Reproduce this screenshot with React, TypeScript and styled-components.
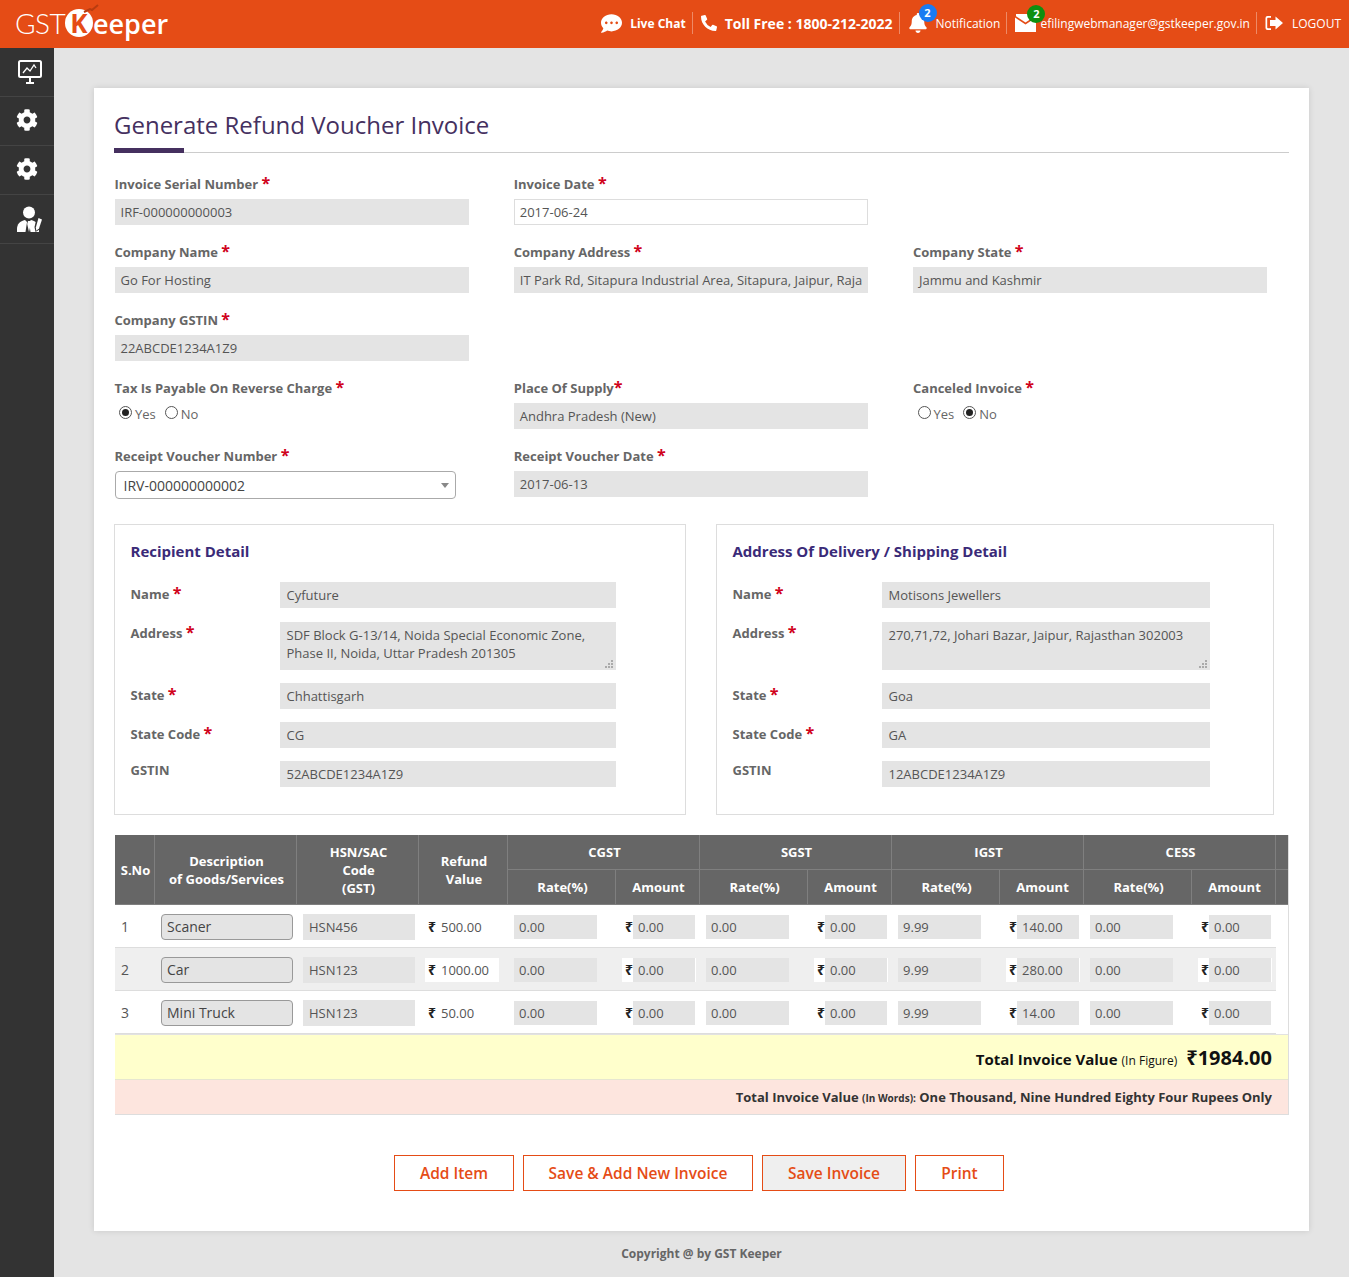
import React from "react";
import styled, { createGlobalStyle } from "styled-components";
import { FaBell, FaCog, FaCommentDots, FaPhoneAlt } from "react-icons/fa";

const ORANGE = "#e54c16";

const GlobalStyle = createGlobalStyle`
  * { box-sizing: border-box; }
  html, body { margin: 0; padding: 0; }
  body {
    background: #e4e4e4;
    font-family: "Open Sans", "Noto Sans", "DejaVu Sans", sans-serif;
    color: #555;
  }
`;

const items = [
  { no: 1, name: "Scaner", hsn: "HSN456", value: "500.00", igst: "140.00" },
  { no: 2, name: "Car", hsn: "HSN123", value: "1000.00", igst: "280.00" },
  { no: 3, name: "Mini Truck", hsn: "HSN123", value: "50.00", igst: "14.00" },
];

const Monitor = () => (
  <svg width="24" height="24" viewBox="0 0 24 24" fill="none" stroke="#fff">
    <rect x="1" y="1" width="22" height="16" rx="1.5" strokeWidth="2" />
    <path d="M5 13l4-5 3 3 4-6 2 3" strokeWidth="1.3" />
    <path d="M12 18v4M8 23h8" strokeWidth="2" />
  </svg>
);

const AgentIcon = () => (
  <svg width="26" height="26" viewBox="0 0 26 26" fill="#fff">
    <circle cx="12" cy="6.500" r="6" />
    <path d="M0 26v-3c0-5 3-8 8-9l2 2-1.500 10z" />
    <path d="M22 26v-3c0-5-3-8-8-9l-2 2 1.500 10z" />
    <path d="M11 15h2l.8 3-1.800 8-1.800-8z" />
    <path d="M20 10.500 26 13l-3.500 10.500L18.500 26l-1-5z" fill="#333" />
    <path d="M21.500 12 25 13.500l-3 9-2.800 2.200-.3-3.500z" />
  </svg>
);

const MailIcon = () => (
  <svg width="21" height="18" viewBox="0 0 21 18" fill="#fff">
    <path d="M0 3.500 10.500 10.500 21 3.500V18H0z" />
    <path d="M1 0h19v2.200L10.500 8.500 1 2.200z" />
  </svg>
);

const LogoutIcon = () => (
  <svg width="18" height="16" viewBox="0 0 18 16" fill="#fff">
    <path d="M6 1H2.500A2 2 0 0 0 .5 3v10a2 2 0 0 0 2 2H6v-1.800H3a.8.8 0 0 1-.8-.8V3.600A.8.8 0 0 1 3 2.800h3z" />
    <path d="M10.500 1.500 18 8l-7.500 6.500V11H5V5h5.500z" />
  </svg>
);

const Grip = () => (
  <svg width="9" height="9" viewBox="0 0 9 9" fill="#aaa">
    <rect x="6" y="0" width="2" height="2" />
    <rect x="3" y="3" width="2" height="2" />
    <rect x="6" y="3" width="2" height="2" />
    <rect x="0" y="6" width="2" height="2" />
    <rect x="3" y="6" width="2" height="2" />
    <rect x="6" y="6" width="2" height="2" />
  </svg>
);

const App = () => {
  return (
    <>
      <GlobalStyle />
      <Header>
        <Logo>
          <LogoThin>GST</LogoThin>
          <LogoBadge>
            K
            <LogoTick width="16" height="9" viewBox="0 0 16 9" fill="none">
              <path d="M1 8 7 5l2 1 6-5" stroke="#b83c10" strokeWidth="2" />
            </LogoTick>
          </LogoBadge>
          <LogoBold>eeper</LogoBold>
        </Logo>
        <HeaderNav>
          <NavItem>
            <FaCommentDots size={21} color="#fff" />
            <ChatText>Live Chat</ChatText>
          </NavItem>
          <NavItem>
            <FaPhoneAlt size={16} color="#fff" />
            <TollText>Toll Free : 1800-212-2022</TollText>
          </NavItem>
          <NavItem>
            <IconWrap>
              <FaBell size={20} color="#fff" />
              <Badge $color="#1a7bf2">2</Badge>
            </IconWrap>
            <NavText $gap={8}>Notification</NavText>
          </NavItem>
          <NavItem>
            <IconWrap>
              <MailIcon />
              <Badge $color="#0f8f10">2</Badge>
            </IconWrap>
            <NavText $gap={4}>efilingwebmanager@gstkeeper.gov.in</NavText>
          </NavItem>
          <NavItem $last>
            <LogoutIcon />
            <NavText $gap={9}>LOGOUT</NavText>
          </NavItem>
        </HeaderNav>
      </Header>

      <Body>
        <Sidebar>
          <SideItem $shift={6}><Monitor /></SideItem>
          <SideItem><FaCog size={22} color="#fff" /></SideItem>
          <SideItem><FaCog size={22} color="#fff" /></SideItem>
          <SideItem $shift={6}><AgentIcon /></SideItem>
        </Sidebar>

        <Main>
          <Card>
            <Title>Generate Refund Voucher Invoice</Title>

            <FormGrid>
              <Field>
                <Label>Invoice Serial Number <Star>*</Star></Label>
                <Input>IRF-000000000003</Input>
              </Field>
              <Field>
                <Label>Invoice Date <Star>*</Star></Label>
                <Input $editable>2017-06-24</Input>
              </Field>
              <Field />

              <Field>
                <Label>Company Name <Star>*</Star></Label>
                <Input>Go For Hosting</Input>
              </Field>
              <Field>
                <Label>Company Address <Star>*</Star></Label>
                <Input>IT Park Rd, Sitapura Industrial Area, Sitapura, Jaipur, Raja</Input>
              </Field>
              <Field>
                <Label>Company State <Star>*</Star></Label>
                <Input>Jammu and Kashmir</Input>
              </Field>

              <Field>
                <Label>Company GSTIN <Star>*</Star></Label>
                <Input>22ABCDE1234A1Z9</Input>
              </Field>
              <Field />
              <Field />

              <Field>
                <Label>Tax Is Payable On Reverse Charge <Star>*</Star></Label>
                <RadioRow>
                  <Radio $checked />Yes
                  <Radio />No
                </RadioRow>
              </Field>
              <Field>
                <Label>Place Of Supply<Star>*</Star></Label>
                <Input>Andhra Pradesh (New)</Input>
              </Field>
              <Field>
                <Label>Canceled Invoice <Star>*</Star></Label>
                <RadioRow>
                  <Radio />Yes
                  <Radio $checked />No
                </RadioRow>
              </Field>

              <Field>
                <Label>Receipt Voucher Number <Star>*</Star></Label>
                <Select>
                  IRV-000000000002
                  <Caret />
                </Select>
              </Field>
              <Field>
                <Label>Receipt Voucher Date <Star>*</Star></Label>
                <Input>2017-06-13</Input>
              </Field>
            </FormGrid>

            <Panels>
              <Panel $width={572} $inset={69}>
                <PanelTitle>Recipient Detail</PanelTitle>
                <PanelRow>
                  <PanelLabel>Name <Star>*</Star></PanelLabel>
                  <Input>Cyfuture</Input>
                </PanelRow>
                <PanelRow>
                  <PanelLabel>Address <Star>*</Star></PanelLabel>
                  <TextArea>
                    SDF Block G-13/14, Noida Special Economic Zone, Phase II, Noida, Uttar Pradesh 201305
                    <GripSpot><Grip /></GripSpot>
                  </TextArea>
                </PanelRow>
                <PanelRow>
                  <PanelLabel>State <Star>*</Star></PanelLabel>
                  <Input>Chhattisgarh</Input>
                </PanelRow>
                <PanelRow>
                  <PanelLabel>State Code <Star>*</Star></PanelLabel>
                  <Input>CG</Input>
                </PanelRow>
                <PanelRow>
                  <GstinLabel>GSTIN</GstinLabel>
                  <Input>52ABCDE1234A1Z9</Input>
                </PanelRow>
              </Panel>

              <Panel $width={558} $inset={63}>
                <PanelTitle>Address Of Delivery / Shipping Detail</PanelTitle>
                <PanelRow>
                  <PanelLabel>Name <Star>*</Star></PanelLabel>
                  <Input>Motisons Jewellers</Input>
                </PanelRow>
                <PanelRow>
                  <PanelLabel>Address <Star>*</Star></PanelLabel>
                  <TextArea>
                    270,71,72, Johari Bazar, Jaipur, Rajasthan 302003
                    <GripSpot><Grip /></GripSpot>
                  </TextArea>
                </PanelRow>
                <PanelRow>
                  <PanelLabel>State <Star>*</Star></PanelLabel>
                  <Input>Goa</Input>
                </PanelRow>
                <PanelRow>
                  <PanelLabel>State Code <Star>*</Star></PanelLabel>
                  <Input>GA</Input>
                </PanelRow>
                <PanelRow>
                  <GstinLabel>GSTIN</GstinLabel>
                  <Input>12ABCDE1234A1Z9</Input>
                </PanelRow>
              </Panel>
            </Panels>

            <TableWrap>
              <Table>
                <colgroup>
                  <col width="40" />
                  <col width="142" />
                  <col width="122" />
                  <col width="89" />
                  {[0, 1, 2, 3].map((i) => (
                    <React.Fragment key={i}>
                      <col width="108" />
                      <col width="84" />
                    </React.Fragment>
                  ))}
                  <col width="12" />
                </colgroup>
                <thead>
                  <tr>
                    <Th rowSpan={2}>S.No</Th>
                    <Th rowSpan={2}>Description<br />of Goods/Services</Th>
                    <Th rowSpan={2}>HSN/SAC<br />Code<br />(GST)</Th>
                    <Th rowSpan={2}>Refund<br />Value</Th>
                    <Th colSpan={2}>CGST</Th>
                    <Th colSpan={2}>SGST</Th>
                    <Th colSpan={2}>IGST</Th>
                    <Th colSpan={2}>CESS</Th>
                    <Th />
                  </tr>
                  <tr>
                    {["c", "s", "i", "e"].map((k) => (
                      <React.Fragment key={k}>
                        <Th>Rate(%)</Th>
                        <Th>Amount</Th>
                      </React.Fragment>
                    ))}
                    <Th />
                  </tr>
                </thead>
                <tbody>
                  {items.map((item) => {
                    const even = item.no % 2 === 0;
                    const taxes = [
                      { rate: "0.00", amount: "0.00" },
                      { rate: "0.00", amount: "0.00" },
                      { rate: "9.99", amount: item.igst },
                      { rate: "0.00", amount: "0.00" },
                    ];
                    return (
                      <tr key={item.no}>
                        <Td $even={even}><SerialNo>{item.no}</SerialNo></Td>
                        <Td $even={even}><DescInput>{item.name}</DescInput></Td>
                        <Td $even={even}><HsnInput>{item.hsn}</HsnInput></Td>
                        <Td $even={even}>
                          <RefundBox $even={even}><Rupee>₹</Rupee>{item.value}</RefundBox>
                        </Td>
                        {taxes.map((tax, i) => (
                          <React.Fragment key={i}>
                            <Td $even={even}><RateBox>{tax.rate}</RateBox></Td>
                            <Td $even={even}>
                              <AmountWrap $even={even}>
                                <AmountRupee>₹</AmountRupee>
                                <AmountBox>{tax.amount}</AmountBox>
                              </AmountWrap>
                            </Td>
                          </React.Fragment>
                        ))}
                        <EmptyTd />
                      </tr>
                    );
                  })}
                </tbody>
              </Table>
              <FigureRow>
                <FigureLabel>Total Invoice Value</FigureLabel>
                <FigureHint>(In Figure)</FigureHint>
                <FigureValue>₹1984.00</FigureValue>
              </FigureRow>
              <WordsRow>
                Total Invoice Value <WordsHint>(In Words):</WordsHint> One Thousand, Nine Hundred Eighty Four Rupees Only
              </WordsRow>
            </TableWrap>

            <Actions>
              <ActionButton $width={120}>Add Item</ActionButton>
              <ActionButton $width={230}>Save &amp; Add New Invoice</ActionButton>
              <ActionButton $width={144} $active>Save Invoice</ActionButton>
              <ActionButton $width={89}>Print</ActionButton>
            </Actions>
          </Card>
          <Footer>Copyright @ by GST Keeper</Footer>
        </Main>
      </Body>
    </>
  );
};

export default App;

const Header = styled.header`
  height: 48px;
  background: ${ORANGE};
  display: flex;
  align-items: center;
  justify-content: space-between;
  padding: 0 8px 2px 15px;
  color: #fff;
`;

const Logo = styled.div`
  display: flex;
  align-items: center;
`;

const LogoThin = styled.span`
  font-family: "Lato", sans-serif;
  font-weight: 300;
  font-size: 28px;
  width: 50px;
  letter-spacing: -0.5px;
`;

const LogoBadge = styled.span`
  position: relative;
  width: 28px;
  height: 28px;
  border-radius: 50%;
  background: #fff;
  color: ${ORANGE};
  font-weight: 700;
  font-size: 26px;
  line-height: 28px;
  text-align: center;
`;

const LogoTick = styled.svg`
  position: absolute;
  top: -5px;
  left: 18px;
`;

const LogoBold = styled.span`
  font-size: 27px;
  font-weight: 600;
  line-height: 30px;
  margin-top: 2px;
  margin-left: 0;
`;

const HeaderNav = styled.nav`
  display: flex;
  align-items: center;
`;

const NavItem = styled.div<{ $last?: boolean }>`
  display: flex;
  align-items: center;
  height: 22px;
  padding: 0 ${(p) => (p.$last ? "0" : "6px")} 0 8px;
  border-right: ${(p) => (p.$last ? "none" : "1px solid rgba(255, 255, 255, 0.35)")};
`;

const ChatText = styled.span`
  font-size: 12px;
  font-weight: 700;
  margin-left: 8px;
`;

const TollText = styled.span`
  font-size: 14px;
  font-weight: 700;
  margin-left: 8px;
`;

const NavText = styled.span<{ $gap: number }>`
  font-size: 12px;
  margin-left: ${(p) => p.$gap}px;
`;

const IconWrap = styled.span`
  position: relative;
  display: flex;
`;

const Badge = styled.span<{ $color: string }>`
  position: absolute;
  top: -9px;
  right: -9px;
  width: 18px;
  height: 18px;
  border-radius: 50%;
  background: ${(p) => p.$color};
  color: #fff;
  font-size: 11px;
  font-weight: 700;
  line-height: 18px;
  text-align: center;
`;

const Body = styled.div`
  display: flex;
  min-height: 1229px;
`;

const Sidebar = styled.aside`
  width: 54px;
  flex-shrink: 0;
  background: #333;
`;

const SideItem = styled.div<{ $shift?: number }>`
  height: 49px;
  padding-left: ${(p) => p.$shift ?? 0}px;
  padding-bottom: ${(p) => (p.$shift ? 0 : 2)}px;
  display: flex;
  align-items: center;
  justify-content: center;
  border-bottom: 1px solid #444;
`;

const Main = styled.main`
  flex: 1;
  min-width: 0;
  padding: 40px 40px 0;
`;

const Card = styled.section`
  background: #fff;
  box-shadow: 0 0 6px rgba(0, 0, 0, 0.12);
  padding: 20px 20px 40px;
  height: 1143px;
`;

const Title = styled.h1`
  position: relative;
  margin: 0 0 23px;
  height: 45px;
  font-size: 24px;
  line-height: 34px;
  font-weight: 400;
  color: #45305f;
  border-bottom: 1px solid #ccc;

  &::after {
    content: "";
    position: absolute;
    left: 0;
    bottom: -1px;
    width: 70px;
    height: 5px;
    background: #45305f;
  }
`;

const FormGrid = styled.div`
  display: grid;
  margin-left: 0.500px;
  grid-template-columns: 399.250px 399.250px 1fr;
  grid-auto-rows: 68px;
`;

const Field = styled.div`
  width: 354.250px;
`;

const Label = styled.div`
  height: 23px;
  font-size: 13px;
  font-weight: 700;
  line-height: 17px;
  color: #666;
`;

const Star = styled.span`
  color: #d0021b;
  font-size: 16px;
  line-height: 12px;
`;

const Input = styled.div<{ $editable?: boolean }>`
  height: 26px;
  padding: 0 ${(p) => (p.$editable ? 5 : 6)}px;
  font-size: 13px;
  color: #555;
  white-space: nowrap;
  overflow: hidden;
  background: ${(p) => (p.$editable ? "#fff" : "#e4e4e4")};
  border: ${(p) => (p.$editable ? "1px solid #ddd" : "none")};
  line-height: ${(p) => (p.$editable ? "24px" : "26px")};
`;

const RadioRow = styled.div`
  display: flex;
  align-items: center;
  height: 20px;
  margin-top: 1px;
  padding-left: 4.500px;
  font-size: 13px;
  color: #666;
`;

const Radio = styled.span<{ $checked?: boolean }>`
  width: 13px;
  height: 13px;
  border-radius: 50%;
  border: 1px solid #555;
  background: #fff;
  margin: -3px 3px 0 0;
  display: inline-flex;
  align-items: center;
  justify-content: center;

  &:not(:first-child) {
    margin-left: 9px;
  }

  &::after {
    content: "";
    width: 7px;
    height: 7px;
    border-radius: 50%;
    background: ${(p) => (p.$checked ? "#222" : "transparent")};
  }
`;

const Select = styled.div`
  width: 341.500px;
  height: 28px;
  padding: 1px 9px 0 8px;
  border: 1px solid #aaa;
  border-radius: 4px;
  font-size: 14px;
  line-height: 28px;
  color: #444;
  display: flex;
  align-items: center;
  justify-content: space-between;
`;

const Caret = styled.span`
  width: 0;
  height: 0;
  margin-right: -3px;
  border-left: 4px solid transparent;
  border-right: 4px solid transparent;
  border-top: 5px solid #888;
`;

const Panels = styled.div`
  display: flex;
  gap: 30px;
  margin-top: 8px;
`;

const Panel = styled.div<{ $width: number; $inset: number }>`
  width: ${(p) => p.$width}px;
  height: 291px;
  padding: 16px ${(p) => p.$inset}px 0 15.500px;
  border: 1px solid #ddd;
`;

const PanelTitle = styled.h2`
  margin: 0 0 20px;
  height: 21px;
  font-size: 15px;
  line-height: 20px;
  font-weight: 700;
  color: #3a2a78;
`;

const PanelRow = styled.div`
  display: grid;
  grid-template-columns: 149.500px 1fr;
  margin-bottom: 13px;

  ${Input} {
    padding: 0 6.500px;
  }
`;

const PanelLabel = styled.div`
  font-size: 13px;
  font-weight: 700;
  line-height: 24px;
  color: #666;
`;

const GstinLabel = styled(PanelLabel)`
  line-height: 18px;
`;

const TextArea = styled.div`
  position: relative;
  height: 48px;
  padding: 4px 6.500px;
  font-size: 13px;
  line-height: 18px;
  color: #555;
  background: #e4e4e4;
  margin-top: 1px;
`;

const GripSpot = styled.span`
  position: absolute;
  right: 2px;
  bottom: 1px;
  display: flex;
`;

const TableWrap = styled.div`
  margin: 20px 0 0 1px;
  width: 1174px;
  border-right: 1px solid #ddd;
  border-bottom: 1px solid #ddd;
`;

const Table = styled.table`
  width: 1173px;
  table-layout: fixed;
  border-collapse: separate;
  border-spacing: 0;
  font-size: 13px;
`;

const Th = styled.th`
  height: 35px;
  padding: 0 0 0 2px;
  background: #666;
  color: #fff;
  font-size: 13px;
  font-weight: 700;
  line-height: 18px;
  text-align: center;
  border-right: 1px solid #7f7f7f;
  border-bottom: 1px solid #7f7f7f;

  &:last-child {
    border-right: none;
  }
`;

const Td = styled.td<{ $even: boolean }>`
  height: 43px;
  padding: 1px 0 0;
  background: ${(p) => (p.$even ? "#efefef" : "#fff")};
  border-bottom: 1px solid #ddd;
  vertical-align: middle;
`;

const EmptyTd = styled.td`
  padding: 0;
`;

const SerialNo = styled.span`
  padding-left: 6px;
  font-size: 14px;
  color: #555;
`;

const DescInput = styled.div`
  width: 132px;
  height: 26px;
  margin-left: 6px;
  padding: 0 5px;
  font-size: 14px;
  line-height: 24px;
  color: #444;
  background: #e4e4e4;
  border: 1px solid #999;
  border-radius: 4px;
`;

const HsnInput = styled.div`
  width: 112px;
  height: 26px;
  margin-left: 6px;
  padding: 0 6px;
  line-height: 26px;
  color: #555;
  background: #e4e4e4;
`;

const RefundBox = styled.div<{ $even: boolean }>`
  width: 74px;
  height: 24px;
  margin-left: 6px;
  padding-left: 3px;
  line-height: 24px;
  color: #555;
  background: ${(p) => (p.$even ? "#fff" : "transparent")};
`;

const Rupee = styled.span`
  display: inline-block;
  width: 13px;
  font-size: 14px;
  font-weight: 700;
  color: #222;
`;

const RateBox = styled.div`
  width: 83px;
  height: 24px;
  margin-left: 6px;
  padding-left: 5px;
  line-height: 24px;
  color: #555;
  background: #e4e4e4;
`;

const AmountWrap = styled.div<{ $even: boolean }>`
  display: flex;
  width: 74px;
  height: 24px;
  margin-left: 6px;
  background: ${(p) => (p.$even ? "#fff" : "transparent")};
`;

const AmountRupee = styled.span`
  width: 11px;
  padding-left: 3px;
  font-size: 14px;
  font-weight: 700;
  line-height: 24px;
  color: #222;
`;

const AmountBox = styled.div`
  width: 62px;
  padding-left: 5px;
  line-height: 24px;
  color: #555;
  background: #e4e4e4;
`;

const FigureRow = styled.div`
  height: 46px;
  padding: 3px 16px 0 0;
  display: flex;
  align-items: center;
  justify-content: flex-end;
  background: #ffc;
  border-top: 1px solid #e2e2e2;
  border-bottom: 1px solid #e6e6d0;
  color: #111;
`;

const FigureLabel = styled.span`
  font-size: 15px;
  font-weight: 700;
`;

const FigureHint = styled.span`
  font-size: 12px;
  margin: 3px 9px 0 4px;
`;

const FigureValue = styled.span`
  font-size: 20px;
  font-weight: 700;
  margin-top: -3px;
`;

const WordsRow = styled.div`
  height: 34px;
  padding-right: 16px;
  background: #fde5de;
  font-size: 13px;
  font-weight: 700;
  line-height: 35px;
  color: #333;
  text-align: right;
`;

const WordsHint = styled.span`
  font-size: 10px;
`;

const Actions = styled.div`
  display: flex;
  justify-content: center;
  gap: 9px;
  margin-top: 40px;
  padding-right: 5px;
`;

const ActionButton = styled.button<{ $width: number; $active?: boolean }>`
  width: ${(p) => p.$width}px;
  height: 36px;
  padding: 0;
  font-family: inherit;
  font-size: 15.500px;
  font-weight: 600;
  color: ${ORANGE};
  background: ${(p) => (p.$active ? "#efefef" : "#fff")};
  border: 1px solid ${ORANGE};
`;

const Footer = styled.footer`
  height: 46px;
  font-size: 12px;
  font-weight: 700;
  line-height: 46px;
  color: #666;
  text-align: center;
`;
